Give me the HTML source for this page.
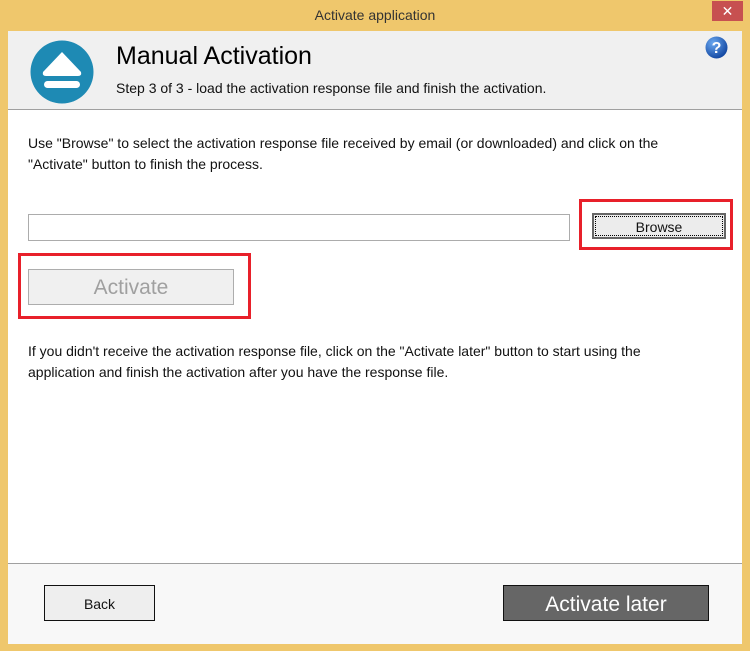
<!DOCTYPE html>
<html><head><style>
body{margin:0;width:750px;height:651px;background:#efc76c;position:relative;overflow:hidden;font-family:"Liberation Sans","DejaVu Sans",sans-serif;}
.a{position:absolute;}
.t{font-size:14px;color:#111;line-height:21px;}
</style></head><body>
<div class="a" style="left:0;top:0;width:750px;height:31px;text-align:center;font-size:14px;line-height:31px;color:#333;">Activate application</div>
<div class="a" style="left:712px;top:1px;width:31px;height:20px;background:#c75050;color:#fff;text-align:center;font-size:14px;line-height:20px;font-weight:bold;">✕</div>
<div class="a" style="left:8px;top:31px;width:734px;height:612px;background:#fff;"></div>
<div class="a" style="left:8px;top:31px;width:734px;height:78px;background:#f0f0f0;border-bottom:1px solid #a0a0a0;"></div>
<svg class="a" style="left:30px;top:40px" width="64" height="64" viewBox="0 0 64 64"><circle cx="32" cy="32" r="31.5" fill="#1e8ab4"/><path d="M32 12 L51 32 Q52 36 48 36 L16 36 Q12 36 13 32 Z" fill="#fff"/><rect x="14" y="41" width="36" height="7" rx="3.5" fill="#fff"/></svg>
<div class="a" style="left:116px;top:42px;font-size:25px;color:#000;">Manual Activation</div>
<div class="a t" style="left:116px;top:78px;">Step 3 of 3 - load the activation response file and finish the activation.</div>
<svg class="a" style="left:705px;top:36px" width="23" height="23" viewBox="0 0 23 23"><defs><radialGradient id="g" cx="0.35" cy="0.3" r="0.8"><stop offset="0" stop-color="#6aa8f0"/><stop offset="1" stop-color="#0a3e9a"/></radialGradient></defs><circle cx="11.5" cy="11.5" r="11" fill="url(#g)"/><text x="11.5" y="17" font-size="16" font-weight="bold" fill="#fff" text-anchor="middle" font-family="Liberation Sans">?</text></svg>
<div class="a t" style="left:28px;top:133px;width:690px;">Use "Browse" to select the activation response file received by email (or downloaded) and click on the "Activate" button to finish the process.</div>
<div class="a" style="left:28px;top:214px;width:540px;height:25px;border:1px solid #acacac;background:#fff;"></div>
<div class="a" style="left:579px;top:199px;width:148px;height:45px;border:3px solid #e8202a;"></div>
<div class="a" style="left:592px;top:213px;width:130px;height:22px;border:2px solid #666;background:#ececec;"><div style="position:absolute;inset:1px;border:1px dotted #000;text-align:center;font-size:14px;line-height:20px;color:#111;">Browse</div></div>
<div class="a" style="left:18px;top:253px;width:227px;height:60px;border:3px solid #e8202a;"></div>
<div class="a" style="left:28px;top:269px;width:204px;height:34px;border:1px solid #adadad;background:#f0f0f0;text-align:center;font-size:21px;line-height:36px;color:#a0a0a0;">Activate</div>
<div class="a t" style="left:28px;top:341px;width:690px;">If you didn't receive the activation response file, click on the "Activate later" button to start using the<br>application and finish the activation after you have the response file.</div>
<div class="a" style="left:8px;top:563px;width:734px;height:80px;background:#f8f8f8;border-top:1px solid #a0a0a0;"></div>
<div class="a" style="left:44px;top:585px;width:109px;height:34px;border:1px solid #111;background:#eeeeee;text-align:center;font-size:14px;line-height:36px;color:#111;">Back</div>
<div class="a" style="left:503px;top:585px;width:204px;height:34px;border:1px solid #111;background:#666;text-align:center;font-size:21px;line-height:38px;color:#fff;">Activate later</div>
</body></html>
